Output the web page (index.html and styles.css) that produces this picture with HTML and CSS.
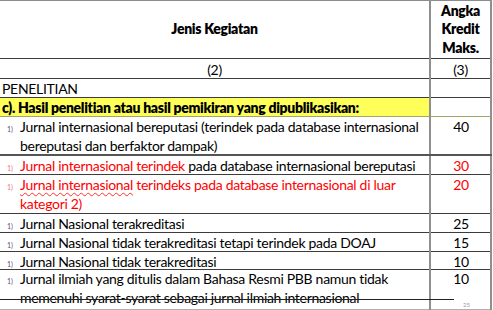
FILE: index.html
```html
<!DOCTYPE html>
<html>
<head>
<meta charset="utf-8">
<link rel="stylesheet" href="styles.css">
</head>
<body>
<div class="page">
  <table class="tbl">
    <colgroup><col class="c-main"><col class="c-val"></colgroup>
    <tr class="r-head">
      <td><div class="cell h57 head">Jenis Kegiatan</div></td>
      <td><div class="cell h57 head">Angka<br>Kredit<br>Maks.</div></td>
    </tr>
    <tr>
      <td><div class="cell h18 center">(2)</div></td>
      <td><div class="cell h18 center">(3)</div></td>
    </tr>
    <tr>
      <td><div class="cell h18 sec">PENELITIAN</div></td>
      <td><div class="cell h18"></div></td>
    </tr>
    <tr class="r-yel">
      <td class="yel"><div class="cell h18 sec">c). Hasil penelitian atau hasil pemikiran yang dipublikasikan:</div></td>
      <td><div class="cell h18"></div></td>
    </tr>
    <tr class="r-dbl">
      <td><div class="cell h37 item"><span class="mk">1)</span><span class="txt">Jurnal internasional bereputasi (terindek pada database internasional<br>bereputasi dan berfaktor dampak)</span></div></td>
      <td><div class="cell h37 val">40</div></td>
    </tr>
    <tr>
      <td><div class="cell h18 item"><span class="mk red-mk">1)</span><span class="txt"><span class="red">Jurnal internasional terindek</span> pada database internasional bereputasi</span></div></td>
      <td><div class="cell h18 val red">30</div></td>
    </tr>
    <tr>
      <td><div class="cell h38 item"><span class="mk red-mk">1)</span><span class="txt red"><span class="wavy">Jurnal internasional</span> terindeks pada database internasional di luar<br>kategori 2)</span></div></td>
      <td><div class="cell h38 val red">20</div></td>
    </tr>
    <tr>
      <td><div class="cell h18 item"><span class="mk">1)</span><span class="txt">Jurnal Nasional terakreditasi</span></div></td>
      <td><div class="cell h18 val">25</div></td>
    </tr>
    <tr>
      <td><div class="cell h18 item"><span class="mk">1)</span><span class="txt">Jurnal Nasional tidak terakreditasi tetapi terindek pada DOAJ</span></div></td>
      <td><div class="cell h18 val">15</div></td>
    </tr>
    <tr>
      <td><div class="cell h17 item"><span class="mk">1)</span><span class="txt">Jurnal Nasional tidak terakreditasi</span></div></td>
      <td><div class="cell h17 val">10</div></td>
    </tr>
    <tr class="r-last">
      <td><div class="cell h40 item up"><span class="mk">1)</span><span class="txt">Jurnal ilmiah yang ditulis dalam Bahasa Resmi PBB namun tidak<br>memenuhi syarat-syarat sebagai jurnal ilmiah internasional</span></div></td>
      <td><div class="cell h40 val up">10</div></td>
    </tr>
  </table>
  <div class="strike"></div>
  <div class="pgnum">25</div>
</div>
</body>
</html>
```

FILE: styles.css
```css
html, body {
  margin: 0;
  padding: 0;
  background: #ffffff;
}
.page {
  position: relative;
  width: 493px;
  height: 310px;
  overflow: hidden;
  font-family: Lato, "Open Sans", sans-serif;
  font-size: 14px;
  letter-spacing: -0.3px;
  color: #000;
}
.tbl {
  border-collapse: collapse;
  table-layout: fixed;
  width: 491px;
  border-top: 1px solid #8c8c8c;
}
.c-main { width: 430px; }
.c-val { width: 61px; }
.tbl td {
  padding: 0;
  vertical-align: top;
  border-bottom: 1px solid #3c3c3c;
  border-right: 2px solid #8f8f8f;
}
.cell {
  line-height: 19px;
  white-space: nowrap;
  overflow: visible;
}
.h57 { height: 57px; }
.h18 { height: 18px; }
.h17 { height: 17px; }
.h37 { height: 37px; }
.h38 { height: 38px; }
.h40 { height: 40px; }
.head {
  display: flex;
  flex-direction: column;
  justify-content: center;
  align-items: center;
  text-align: center;
  font-weight: 800;
  line-height: 18.5px;
}
.center { text-align: center; padding-top: 1px; }
.sec { padding-left: 2px; }
.yel {
  background: #ffff5a;
  font-weight: 800;
}
.r-yel td { border-bottom-color: #a5a56a; }
.r-dbl td {
  border-bottom: 2px solid #555;
}
.item {
  display: flex;
  align-items: baseline;
}
.up { margin-top: -1px; }
.mk {
  flex: 0 0 auto;
  width: 20px;
  padding-left: 7px;
  box-sizing: border-box;
  font-size: 7px;
  letter-spacing: 0;
  color: #5b5075;
}
.red-mk { color: #e27a86; }
.txt { flex: 1 1 auto; }
.val { text-align: center; padding-left: 1px; }
.red { color: #ff0000; }
.wavy {
  text-decoration: underline wavy #ff3030;
  text-decoration-thickness: 1px;
  text-underline-offset: 2px;
}
.r-last td { border-bottom: 1px solid #b0b0b0; }
.strike {
  position: absolute;
  left: 0;
  top: 299px;
  width: 454px;
  height: 1px;
  background: #222;
}
.pgnum {
  position: absolute;
  left: 463px;
  top: 301px;
  font-size: 6px;
  letter-spacing: 0;
  color: #9a9a9a;
}
```
